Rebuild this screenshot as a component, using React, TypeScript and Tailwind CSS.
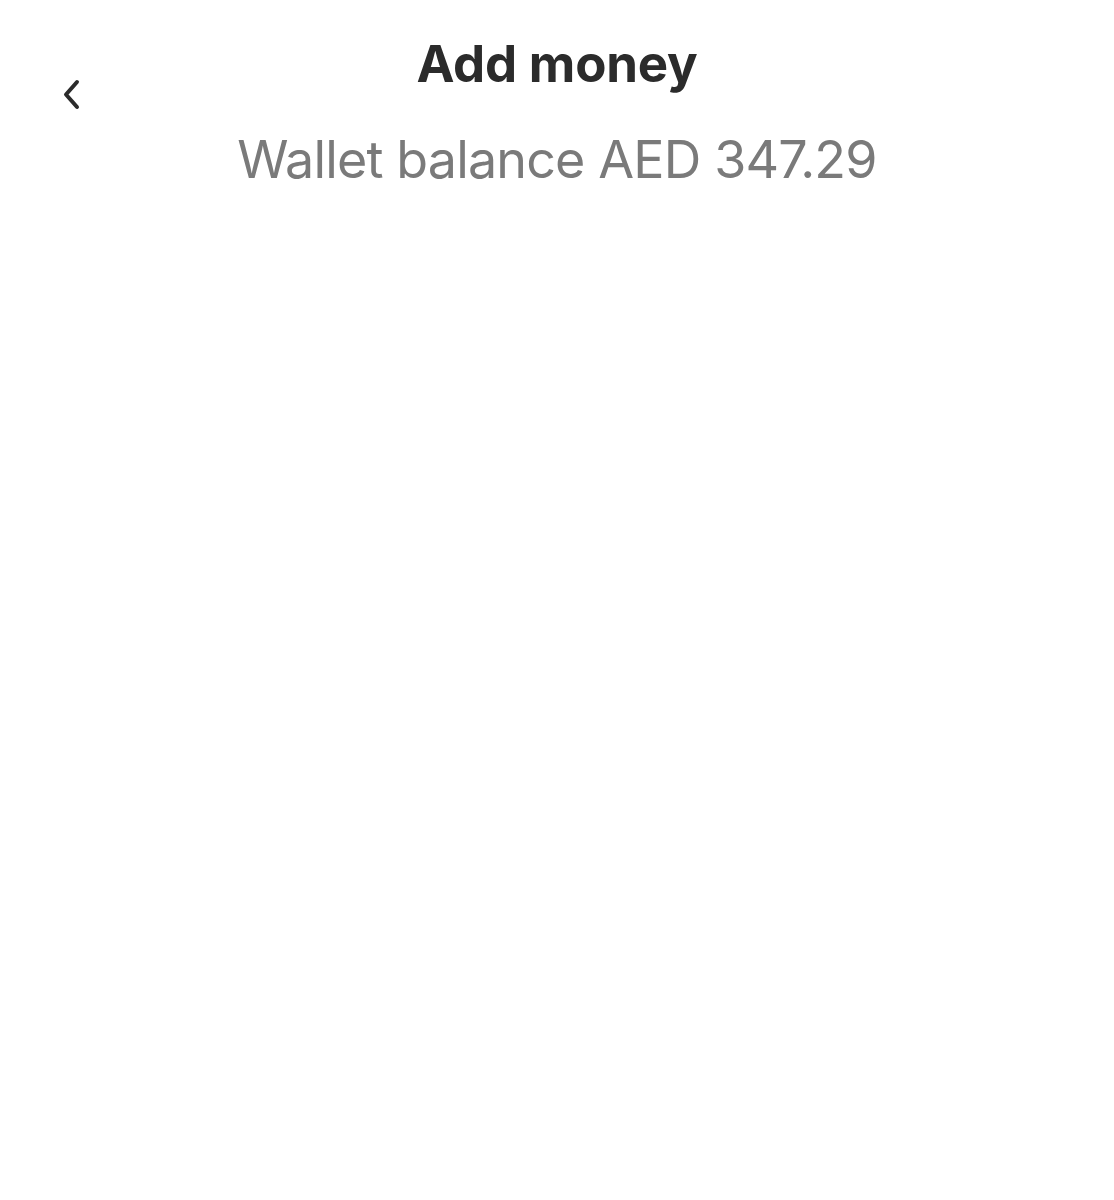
export default function App() {
  return (
    <main className="min-h-[1200px] bg-white font-['Inter',sans-serif]">
      <header className="relative pt-[34px] text-center">
        <button className="absolute left-[54px] top-[72px] p-1 text-[#2b2b2b]" aria-label="Back">
          <svg width="24" height="36" viewBox="0 0 24 36" fill="none" stroke="currentColor" strokeWidth="4" strokeLinecap="round" strokeLinejoin="round">
            <path d="M19 6 L8 18.5 L19 31" />
          </svg>
        </button>
        <h1 className="text-[51px] leading-[60px] font-bold tracking-[-0.2px] text-[#2b2b2b]">Add money</h1>
        <p className="mt-[34px] text-[52px] leading-[64px] tracking-[-0.85px] text-[#7a7a7a]">Wallet balance AED 347.29</p>
      </header>
    </main>
  )
}
